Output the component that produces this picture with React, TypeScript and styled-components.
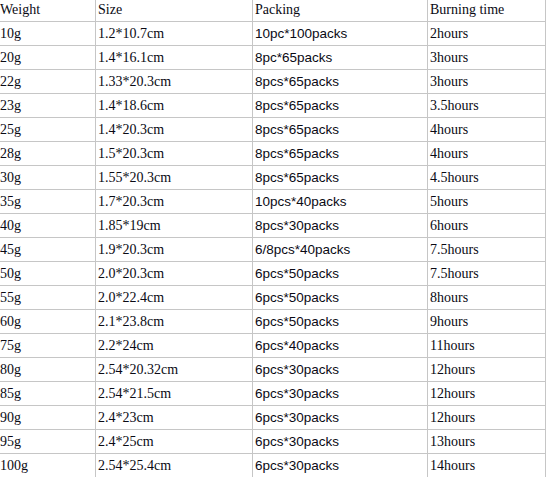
import React from "react";
import styled, { createGlobalStyle } from "styled-components";

const Global = createGlobalStyle`
  html, body { margin: 0; padding: 0; background: #fff; }
  body { overflow: hidden; }
`;

const Grid = styled.div`
  display: grid;
  grid-template-columns: 96px 156px 174px 117px;
  grid-auto-rows: 23px;
  gap: 1px;
  padding: 1px;
  background: #c6c6c6;
  width: max-content;
  margin: -3px 0 0 -2px;
`;

const Cell = styled.div<{ $sans?: boolean; $first?: boolean }>`
  background: #fff;
  display: flex;
  align-items: center;
  padding-left: ${(p) => (p.$first ? "1px" : "2px")};
  font-family: ${(p) =>
    p.$sans ? `"Liberation Sans", Arial, sans-serif` : `"Liberation Serif", "Times New Roman", serif`};
  font-size: ${(p) => (p.$sans ? "13.5px" : "14px")};
  color: #0a0a14;
  white-space: nowrap;
`;

const header = ["Weight", "Size", "Packing", "Burning time"];

const rows: string[][] = [
  ["10g", "1.2*10.7cm", "10pc*100packs", "2hours"],
  ["20g", "1.4*16.1cm", "8pc*65packs", "3hours"],
  ["22g", "1.33*20.3cm", "8pcs*65packs", "3hours"],
  ["23g", "1.4*18.6cm", "8pcs*65packs", "3.5hours"],
  ["25g", "1.4*20.3cm", "8pcs*65packs", "4hours"],
  ["28g", "1.5*20.3cm", "8pcs*65packs", "4hours"],
  ["30g", "1.55*20.3cm", "8pcs*65packs", "4.5hours"],
  ["35g", "1.7*20.3cm", "10pcs*40packs", "5hours"],
  ["40g", "1.85*19cm", "8pcs*30packs", "6hours"],
  ["45g", "1.9*20.3cm", "6/8pcs*40packs", "7.5hours"],
  ["50g", "2.0*20.3cm", "6pcs*50packs", "7.5hours"],
  ["55g", "2.0*22.4cm", "6pcs*50packs", "8hours"],
  ["60g", "2.1*23.8cm", "6pcs*50packs", "9hours"],
  ["75g", "2.2*24cm", "6pcs*40packs", "11hours"],
  ["80g", "2.54*20.32cm", "6pcs*30packs", "12hours"],
  ["85g", "2.54*21.5cm", "6pcs*30packs", "12hours"],
  ["90g", "2.4*23cm", "6pcs*30packs", "12hours"],
  ["95g", "2.4*25cm", "6pcs*30packs", "13hours"],
  ["100g", "2.54*25.4cm", "6pcs*30packs", "14hours"],
];

export default function App() {
  return (
    <>
      <Global />
      <Grid>
        {header.map((h, i) => (
          <Cell key={"h" + i} $first={i === 0}>
            {h}
          </Cell>
        ))}
        {rows.map((r, ri) =>
          r.map((c, ci) => (
            <Cell key={ri + "-" + ci} $first={ci === 0} $sans={ci === 2}>
              {c}
            </Cell>
          ))
        )}
      </Grid>
    </>
  );
}
